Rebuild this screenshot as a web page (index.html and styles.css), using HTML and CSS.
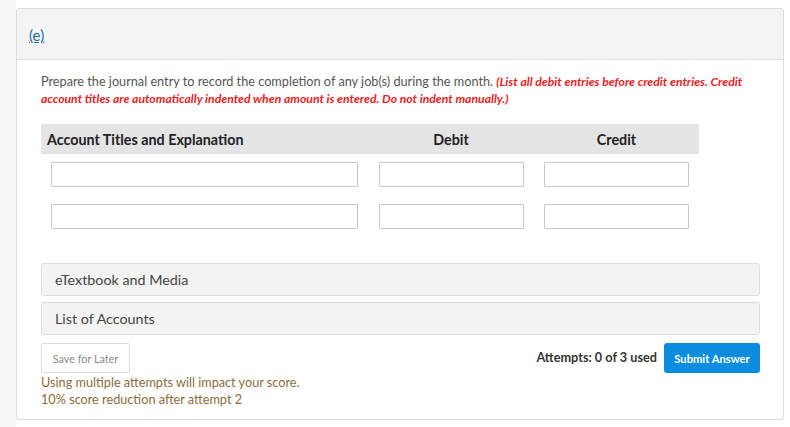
FILE: index.html
```html
<!DOCTYPE html>
<html>
<head>
<meta charset="utf-8">
<link rel="stylesheet" href="styles.css">
</head>
<body>
<div class="page">
  <div class="card">
    <div class="card-head"><a class="part-link" href="#">(e)</a></div>
    <div class="card-body">
      <p class="prompt">Prepare the journal entry to record the completion of any job(s) during the month. <em class="note">(List all debit entries before credit entries. Credit account titles are automatically indented when amount is entered. Do not indent manually.)</em></p>
      <div class="journal">
        <div class="jhead">
          <div class="jh-title">Account Titles and Explanation</div>
          <div class="jh-num">Debit</div>
          <div class="jh-num">Credit</div>
        </div>
        <div class="jrow">
          <div class="cell"><input class="field" type="text"></div>
          <div class="cell"><input class="field" type="text"></div>
          <div class="cell"><input class="field" type="text"></div>
        </div>
        <div class="jrow">
          <div class="cell"><input class="field" type="text"></div>
          <div class="cell"><input class="field" type="text"></div>
          <div class="cell"><input class="field" type="text"></div>
        </div>
      </div>
      <div class="accordion">
        <div class="acc-item">eTextbook and Media</div>
        <div class="acc-item">List of Accounts</div>
      </div>
      <div class="actions">
        <div class="actions-left">
          <button class="btn-save">Save for Later</button>
          <div class="warn">Using multiple attempts will impact your score.<br>10% score reduction after attempt 2</div>
        </div>
        <div class="actions-right">
          <span class="attempts">Attempts: 0 of 3 used</span>
          <button class="btn-submit">Submit Answer</button>
        </div>
      </div>
    </div>
  </div>
</div>
</body>
</html>
```

FILE: styles.css
```css
html {
  background: linear-gradient(to right, #f8f8f8 16px, #ffffff 16px);
}
body {
  margin: 0;
  font-family: Lato, "Open Sans", "Liberation Sans", sans-serif;
  color: #555;
}
.page {
  padding: 8px 6px 7px 16px;
}
.card {
  border: 1px solid #dcdcdc;
  border-radius: 3px;
  background: #fff;
}
.card-head {
  height: 50px;
  background: #f4f4f4;
  border-bottom: 1px solid #dedede;
  padding-left: 12px;
  display: flex;
  align-items: center;
}
.part-link {
  color: #1f6ea8;
  font-size: 15px;
  text-decoration: underline;
  margin-top: 2px;
}
.card-body {
  padding: 13px 23px 11px 24px;
}
.prompt {
  margin: 0;
  font-size: 12.7px;
  line-height: 17px;
  color: #555;
}
.note {
  color: #ee1c25;
  font-weight: bold;
  font-style: italic;
  font-size: 12.2px;
}
.journal {
  margin-top: 17px;
  width: 658px;
}
.jhead, .jrow {
  display: grid;
  grid-template-columns: 327px 166px 165px;
}
.jhead {
  background: #e4e4e4;
  height: 30px;
  align-items: center;
  font-size: 14.3px;
  font-weight: bold;
  color: #222;
}
.jh-title {
  padding-left: 6px;
}
.jh-num {
  text-align: center;
}
.jrow {
  padding: 8px 0 9px;
}
.cell {
  padding: 0 10px 0 10px;
}
.cell:nth-child(2) {
  padding: 0 10px 0 11px;
}
.field {
  display: block;
  box-sizing: border-box;
  width: 100%;
  height: 25px;
  border: 1px solid #c8c8c8;
  border-radius: 1px;
  margin: 0;
  background: #fff;
}
.accordion {
  margin-top: 25px;
  display: flex;
  flex-direction: column;
  gap: 6px;
}
.acc-item {
  box-sizing: border-box;
  height: 33px;
  border: 1px solid #dddddd;
  border-radius: 3px;
  background: #f3f3f3;
  padding-left: 13px;
  display: flex;
  align-items: center;
  font-size: 14.3px;
  color: #444;
}
.actions {
  margin-top: 8px;
  display: flex;
  justify-content: space-between;
  align-items: flex-start;
}
.btn-save {
  display: block;
  width: 89px;
  height: 30px;
  border: 1px solid #dcdcdc;
  border-radius: 2px;
  background: #fff;
  color: #888;
  font-family: Lato, "Open Sans", "Liberation Sans", sans-serif;
  font-size: 10.8px;
  padding: 0;
}
.warn {
  margin-top: 1px;
  font-size: 12.7px;
  line-height: 17px;
  color: #8a6d3b;
}
.actions-right {
  display: flex;
  align-items: center;
  gap: 7px;
}
.attempts {
  font-size: 12.7px;
  font-weight: bold;
  color: #333;
  margin-top: -2px;
}
.btn-submit {
  width: 96px;
  height: 30px;
  border: none;
  border-radius: 3px;
  background: #0a8ddf;
  color: #fff;
  font-family: Lato, "Open Sans", "Liberation Sans", sans-serif;
  font-size: 11.2px;
  font-weight: bold;
  padding: 0;
}
```
